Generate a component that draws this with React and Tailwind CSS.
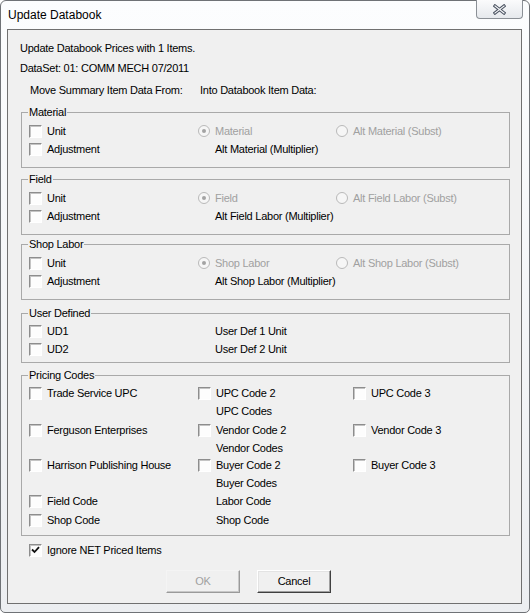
import React from "react";

const font = { fontFamily: '"Liberation Sans", Arial, sans-serif' };

const Check = ({ checked }) => (
    <span className="inline-flex h-[13px] w-[13px] shrink-0 items-center justify-center border border-t-[#8d8d8d] border-l-[#8d8d8d] border-r-white border-b-white bg-[#fdfdfd] shadow-[inset_1px_1px_0_#c4c4c4]">
        {checked && (
            <svg width="9" height="8" viewBox="0 0 9 8">
                <path d="M1 3.5 L3.5 6 L8 1.2" fill="none" stroke="#111" strokeWidth="1.8" />
            </svg>
        )}
    </span>
);

const Radio = ({ checked }) => (
    <span className="inline-flex h-[12px] w-[12px] shrink-0 items-center justify-center rounded-full border border-[#b9b9b9] bg-[#f6f6f6]">
        {checked && <span className="h-[4px] w-[4px] rounded-full bg-[#a3a3a3]" />}
    </span>
);

const Group = ({ title, className, children }) => (
    <fieldset className={className}>
        <legend className="ml-[6px] px-[1px] leading-[14px]">{title}</legend>
        {children}
    </fieldset>
);

const MoveGroup = ({ title, radio, alt, multiplier, className }) => (
    <Group title={title} className={className}>
        <div className="grid grid-cols-[169px_138px_1fr] pl-[7px]">
            <div className="flex h-[18px] items-center gap-[5px]"><Check />Unit</div>
            <div className="flex items-center gap-[5px] text-[#a0a0a0]"><Radio checked />{radio}</div>
            <div className="flex items-center gap-[5px] text-[#a0a0a0]"><Radio />{alt}</div>
            <div className="flex h-[19px] items-center gap-[5px]"><Check />Adjustment</div>
            <div className="flex items-center pl-[17px]">{multiplier}</div>
            <div />
        </div>
    </Group>
);

const pricingRows = [
    { h: 'h-[18px]', cells: [['check', 'Trade Service UPC'], ['check', 'UPC Code 2'], ['check', 'UPC Code 3']] },
    { h: 'h-[19px]', cells: [null, ['text', 'UPC Codes'], null] },
    { h: 'h-[18px]', cells: [['check', 'Ferguson Enterprises'], ['check', 'Vendor Code 2'], ['check', 'Vendor Code 3']] },
    { h: 'h-[18px]', cells: [null, ['text', 'Vendor Codes'], null] },
    { h: 'h-[17px]', cells: [['check', 'Harrison Publishing House'], ['check', 'Buyer Code 2'], ['check', 'Buyer Code 3']] },
    { h: 'h-[18px]', cells: [null, ['text', 'Buyer Codes'], null] },
    { h: 'h-[18px]', cells: [['check', 'Field Code'], ['text', 'Labor Code'], null] },
    { h: 'h-[21px]', cells: [['check', 'Shop Code'], ['text', 'Shop Code'], null] },
];

const Cell = ({ cell, h }) => {
    if (!cell) return <div className={h} />;
    const [kind, label] = cell;
    if (kind === 'text') return <div className={`flex items-center pl-[18px] ${h}`}>{label}</div>;
    return <div className={`flex items-center gap-[5px] whitespace-nowrap ${h}`}><Check />{label}</div>;
};

const App = () => {
    return (
        <div className="h-[613px] w-[531px] overflow-hidden bg-white text-[11px] tracking-[-0.25px] text-black" style={font}>
            <div className="flex h-[613px] w-[530px] flex-col rounded-t-[6px] rounded-b-[5px] border border-[#6f7276] bg-gradient-to-b from-[#fcfdfe] to-[#eceef1] pb-[8px] pl-[6px] pr-[7px]">
                {/* title bar */}
                <div className="flex h-[28px] items-start justify-between">
                    <div className="ml-[1px] mt-[6px] text-[12px] leading-[16px] tracking-normal">Update Databook</div>
                    <div className="-mr-[1px] -mt-[1px] flex h-[19px] w-[47px] items-center justify-center rounded-b-[4px] border border-t-0 border-[#8b9096] bg-gradient-to-b from-[#fbfbfc] to-[#e6e9ed]">
                        <svg width="13" height="11" viewBox="0 0 13 11">
                            <path d="M2 2 L11 9 M11 2 L2 9" stroke="#4b5361" strokeWidth="3.2" strokeLinecap="square" />
                            <path d="M2 2 L11 9 M11 2 L2 9" stroke="#f7f8fa" strokeWidth="1.2" strokeLinecap="square" />
                        </svg>
                    </div>
                </div>

                {/* client area */}
                <div className="flex flex-1 flex-col border border-[#707070] bg-[#f0f0f0] pt-[8px]">
                    <div className="flex h-[20px] items-center pl-[12px]">Update Databook Prices with 1 Items.</div>
                    <div className="flex h-[20px] items-center pl-[12px]">DataSet: 01: COMM MECH 07/2011</div>
                    <div className="mt-[2px] flex h-[20px] items-center pl-[22px]">
                        <span className="w-[170px]">Move Summary Item Data From:</span>
                        <span>Into Databook Item Data:</span>
                    </div>

                    <div className="ml-[13px] mr-[11px] flex flex-col">
                        <MoveGroup
                            title="Material"
                            radio="Material"
                            alt="Alt Material (Subst)"
                            multiplier="Alt Material (Multiplier)"
                            className="mt-[5px] border border-[#a9a9a9] pb-[8px] pt-[3px]"
                        />
                        <MoveGroup
                            title="Field"
                            radio="Field"
                            alt="Alt Field Labor (Subst)"
                            multiplier="Alt Field Labor (Multiplier)"
                            className="mt-[4px] border border-[#a9a9a9] pb-[8px] pt-[3px]"
                        />
                        <MoveGroup
                            title="Shop Labor"
                            radio="Shop Labor"
                            alt="Alt Shop Labor (Subst)"
                            multiplier="Alt Shop Labor (Multiplier)"
                            className="mt-[2px] border border-[#a9a9a9] pb-[8px] pt-[3px]"
                        />

                        <Group title="User Defined" className="mt-[6px] border border-[#a9a9a9] pb-[4px] pt-[2px]">
                            <div className="grid grid-cols-[169px_1fr] pl-[7px]">
                                <div className="flex h-[18px] items-center gap-[5px]"><Check />UD1</div>
                                <div className="flex items-center pl-[17px]">User Def 1 Unit</div>
                                <div className="flex h-[18px] items-center gap-[5px]"><Check />UD2</div>
                                <div className="flex items-center pl-[17px]">User Def 2 Unit</div>
                            </div>
                        </Group>

                        <Group title="Pricing Codes" className="mt-[5px] border border-[#a9a9a9] pb-[4px] pt-[2px]">
                            <div className="grid grid-cols-[169px_155px_1fr] pl-[7px]">
                                {pricingRows.map((row, r) =>
                                    row.cells.map((cell, c) => <Cell key={`${r}-${c}`} cell={cell} h={row.h} />)
                                )}
                            </div>
                        </Group>
                    </div>

                    <div className="mt-[5px] flex h-[18px] items-center gap-[5px] pl-[21px]">
                        <Check checked />Ignore NET Priced Items
                    </div>

                    <div className="mt-[11px] flex gap-[17px] pl-[158px]">
                        <button className="h-[23px] w-[74px] border border-t-[#f4f4f4] border-l-[#f4f4f4] border-r-[#9a9a9a] border-b-[#9a9a9a] bg-[#f0f0f0] text-[#a0a0a0] shadow-[inset_-1px_-1px_0_#c8c8c8]">
                            OK
                        </button>
                        <button className="h-[23px] w-[74px] border border-t-white border-l-white border-r-[#404040] border-b-[#404040] bg-[#f0f0f0] text-black shadow-[inset_-1px_-1px_0_#a0a0a0,inset_1px_1px_0_#e3e3e3]">
                            Cancel
                        </button>
                    </div>
                </div>
            </div>
        </div>
    );
};

export default App;
